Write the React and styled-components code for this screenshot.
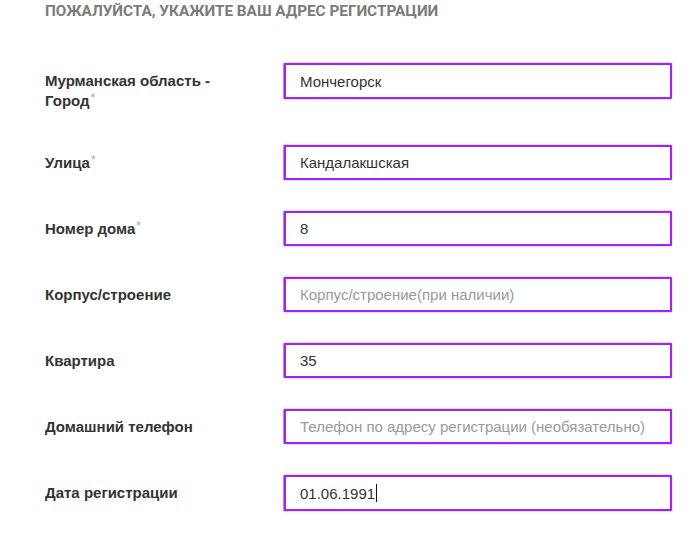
import React from "react";
import styled, { createGlobalStyle } from "styled-components";

const Global = createGlobalStyle`
  html, body { margin: 0; padding: 0; background: #fff; }
  body { font-family: Arial, "Liberation Sans", sans-serif; }
`;

const Page = styled.div`
  width: 700px;
  height: 550px;
  box-sizing: border-box;
  padding: 3px 0 0 45px;
  overflow: hidden;
`;

const Title = styled.h2`
  margin: 0 0 43px;
  font-family: Roboto, "Liberation Sans", sans-serif;
  font-weight: 700;
  font-size: 15.3px;
  line-height: 17px;
  color: #7b7b7b;
  letter-spacing: 0;
`;

const Form = styled.div`
  display: grid;
  grid-template-columns: 239px 388px;
  row-gap: 31px;
  align-items: start;
`;

const Label = styled.label`
  padding: 8px 0 3px;
  font-family: "Liberation Sans", Arial, sans-serif;
  font-weight: 700;
  font-size: 15px;
  line-height: 20px;
  color: #333;
  max-width: 200px;
`;

const Star = styled.span`
  color: #a8a8a8;
  font-weight: 400;
  font-size: 12px;
  line-height: 0;
  vertical-align: 4px;
  margin-left: 1px;
`;

const Field = styled.div`
  position: relative;
  height: ${(p) => p.$h || 35}px;
`;

const Input = styled.input`
  box-sizing: border-box;
  width: 100%;
  height: 100%;
  margin: 0;
  padding: 0 12px 0 14px;
  border: 2px solid #a224ee;
  border-radius: 1px;
  box-shadow: -1px 0 1px rgba(0, 0, 0, 0.35), 0 0 2px rgba(162, 36, 238, 0.55);
  outline: none;
  background: #fff;
  font-family: "Liberation Sans", Arial, sans-serif;
  font-size: 15px;
  color: #333;
  &::placeholder {
    color: #9a9a9a;
    opacity: 1;
  }
`;

const CaretLayer = styled.div`
  position: absolute;
  left: 16px;
  top: 0;
  bottom: 0;
  display: flex;
  align-items: center;
  pointer-events: none;
  font-family: "Liberation Sans", Arial, sans-serif;
  font-size: 15px;
  color: transparent;
  white-space: pre;
`;

const Caret = styled.span`
  display: inline-block;
  width: 1px;
  height: 18px;
  margin-left: 1px;
  background: #111;
`;

const rows = [
  { label: "Мурманская область - Город", req: true, value: "Мончегорск", h: 36 },
  { label: "Улица", req: true, value: "Кандалакшская" },
  { label: "Номер дома", req: true, value: "8" },
  { label: "Корпус/строение", placeholder: "Корпус/строение(при наличии)" },
  { label: "Квартира", value: "35" },
  { label: "Домашний телефон", placeholder: "Телефон по адресу регистрации (необязательно)" },
  { label: "Дата регистрации", value: "01.06.1991", caret: true, h: 36 },
];

export default function App() {
  return (
    <>
      <Global />
      <Page>
        <Title>ПОЖАЛУЙСТА, УКАЖИТЕ ВАШ АДРЕС РЕГИСТРАЦИИ</Title>
        <Form>
          {rows.map((r) => (
            <React.Fragment key={r.label}>
              <Label>
                {r.label}
                {r.req && <Star>*</Star>}
              </Label>
              <Field $h={r.h}>
                <Input defaultValue={r.value} placeholder={r.placeholder} readOnly />
                {r.caret && (
                  <CaretLayer>
                    {r.value}
                    <Caret />
                  </CaretLayer>
                )}
              </Field>
            </React.Fragment>
          ))}
        </Form>
      </Page>
    </>
  );
}
